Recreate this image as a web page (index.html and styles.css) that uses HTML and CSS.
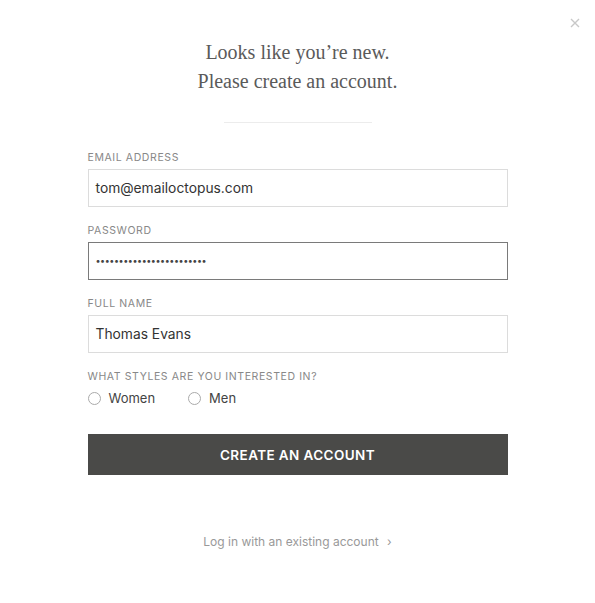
FILE: index.html
```html
<!DOCTYPE html>
<html>
<head>
<meta charset="utf-8">
<link rel="stylesheet" href="styles.css">
</head>
<body>
<div class="modal">
  <button class="close" aria-label="Close">
    <svg width="10" height="10" viewBox="0 0 10 10"><path d="M1 1L9 9M9 1L1 9" stroke="#c8c8c8" stroke-width="1.4" fill="none"/></svg>
  </button>
  <h1 class="title">Looks like you’re new.<br>Please create an account.</h1>
  <div class="divider"></div>
  <form class="form">
    <div class="field">
      <label class="label">EMAIL ADDRESS</label>
      <div class="input">tom@emailoctopus.com</div>
    </div>
    <div class="field">
      <label class="label">PASSWORD</label>
      <div class="input focused dots">••••••••••••••••••••••••</div>
    </div>
    <div class="field">
      <label class="label">FULL NAME</label>
      <div class="input">Thomas Evans</div>
    </div>
    <div class="field">
      <label class="label">WHAT STYLES ARE YOU INTERESTED IN?</label>
      <div class="radios">
        <span class="radio"><span class="circle"></span>Women</span>
        <span class="radio"><span class="circle"></span>Men</span>
      </div>
    </div>
    <div class="button">CREATE AN ACCOUNT</div>
  </form>
  <div class="login">Log in with an existing account <span class="chev">›</span></div>
</div>
</body>
</html>
```
FILE: styles.css
```css
html, body { margin: 0; padding: 0; background: #fff; }
body { font-family: Inter, "Liberation Sans", sans-serif; color: #333; }
.modal { position: relative; width: 595px; height: 603px; }
.close { position: absolute; top: 18px; right: 15px; background: none; border: 0; padding: 0; width: 10px; height: 10px; }
.close svg { display: block; }
.title {
  margin: 0; padding-top: 38px;
  font-family: "Liberation Serif", "DejaVu Serif", serif;
  font-weight: normal; font-size: 20px; line-height: 29px;
  text-align: center; color: #5a5a5a;
}
.divider { width: 148px; height: 1px; background: #ececec; margin: 26px auto 0; }
.form { width: 420px; margin: 28px auto 0; }
.field { margin-bottom: 17px; }
.label { display: block; font-size: 10.5px; letter-spacing: 0.6px; color: #888; line-height: 13px; margin-bottom: 5px; }
.input {
  box-sizing: border-box; height: 38px; border: 1px solid #dcdcdc;
  padding: 0 7px; font-size: 13.8px; line-height: 36px; color: #333;
}
.input.focused { border-color: #7a7a7a; }
.dots { font-size: 9px; letter-spacing: -0.45px; color: #444; }
.radios { display: flex; gap: 33px; margin-top: 7px; font-size: 13px; color: #444; }
.radio { display: flex; align-items: center; gap: 8px; }
.circle { width: 13px; height: 13px; border: 1px solid #aaa; border-radius: 50%; box-sizing: border-box; }
.button {
  margin-top: 28px; height: 41px; background: #4a4a48; color: #fff;
  display: flex; align-items: center; justify-content: center;
  font-size: 13.5px; font-weight: 600; letter-spacing: 0.4px;
}
.login { text-align: center; margin-top: 59px; font-size: 12px; color: #999; }
.chev { margin-left: 5px; font-size: 12px; }
```
